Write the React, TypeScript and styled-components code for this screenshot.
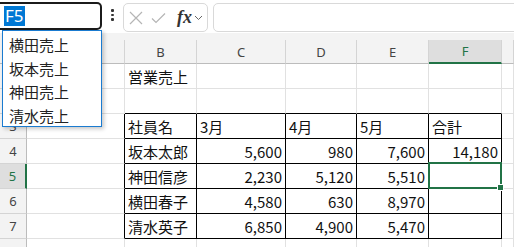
import React from 'react';
import styled, { createGlobalStyle, css } from 'styled-components';

const GlobalStyle = createGlobalStyle`
    html, body {
        margin: 0;
        padding: 0;
        background: #fff;
    }
    body {
        font-family: "Noto Sans CJK JP", "Noto Sans", sans-serif;
        color: #1a1a1a;
    }
`;

const GREEN = '#217346';
const GRID = '#e1e1e1';

const Page = styled.div`
    position: relative;
    width: 514px;
    height: 247px;
    overflow: hidden;
    background: #fff;
`;

const Toolbar = styled.div`
    display: flex;
    align-items: flex-start;
    height: 33px;
    background: #fff;
`;

const NameBox = styled.div`
    display: flex;
    align-items: center;
    box-sizing: border-box;
    width: 102px;
    height: 28px;
    margin-top: 2px;
    padding-left: 4px;
    border: 2px solid #1b1b1b;
    border-left: none;
    border-radius: 0 5px 5px 0;
    font-size: 17px;
    font-family: "Noto Sans", "Noto Sans CJK JP", sans-serif;
`;

const Selected = styled.span`
    background: #0078d4;
    color: #fff;
    padding: 0 1px;
    line-height: 20px;
`;

const Dots = styled.div`
    display: flex;
    flex-direction: column;
    align-items: center;
    justify-content: center;
    gap: 2px;
    width: 21px;
    height: 30px;

    span {
        width: 2.5px;
        height: 2.5px;
        border-radius: 1px;
        background: #333;
    }
`;

const ToolBox = styled.div`
    display: flex;
    align-items: center;
    box-sizing: border-box;
    width: 85px;
    height: 29px;
    margin-top: 3px;
    padding-left: 5px;
    gap: 8px;
    border: 1px solid #d9d9d9;
    border-radius: 5px;
`;

const Fx = styled.span`
    display: flex;
    align-items: center;
    gap: 2px;
    margin-left: 3px;
    font-family: "Liberation Serif", serif;
    font-style: italic;
    font-weight: bold;
    font-size: 18px;
    color: #333;
`;

const FormulaInput = styled.div`
    flex: 1;
    box-sizing: border-box;
    height: 29px;
    margin: 3px -10px 0 5px;
    border: 1px solid #d9d9d9;
    border-radius: 5px;
`;

const HeaderBand = styled.div`
    padding-top: 7px;
    background: #f3f3f3;
`;

const Row = styled.div`
    display: grid;
    grid-template-columns: 27px 98px 72px 89px 71px 72px 73px 1fr;
    height: 25px;
`;

const HeaderRow = styled(Row)`
    height: 24px;
`;

const ColHead = styled.div<{ $active?: boolean }>`
    display: flex;
    align-items: center;
    justify-content: center;
    box-sizing: border-box;
    border-right: 1px solid #d4d4d4;
    border-bottom: 1px solid #bcbcbc;
    background: #f3f3f3;
    font-family: "Noto Sans", sans-serif;
    font-size: 13px;
    color: #444;
    ${(p) =>
        p.$active &&
        css`
            background: #dedede;
            color: ${GREEN};
            border-bottom: 2px solid ${GREEN};
        `}
`;

const RowHead = styled.div<{ $active?: boolean }>`
    display: flex;
    align-items: center;
    justify-content: center;
    box-sizing: border-box;
    border-right: 1px solid #bcbcbc;
    border-bottom: 1px solid #d4d4d4;
    background: #f3f3f3;
    font-family: "Noto Sans", sans-serif;
    font-size: 13px;
    color: #444;
    ${(p) =>
        p.$active &&
        css`
            background: #dedede;
            color: ${GREEN};
            border-right: 2px solid ${GREEN};
        `}
`;

const Cell = styled.div<{
    $num?: boolean;
    $right?: boolean;
    $bottom?: boolean;
    $selected?: boolean;
}>`
    position: relative;
    display: flex;
    align-items: center;
    justify-content: ${(p) => (p.$num ? 'flex-end' : 'flex-start')};
    box-sizing: border-box;
    padding: 0 3px;
    border-right: 1px solid ${(p) => (p.$right ? '#000' : GRID)};
    border-bottom: 1px solid ${(p) => (p.$bottom ? '#000' : GRID)};
    font-size: 15px;
    white-space: nowrap;
    color: #111;

    ${(p) =>
        p.$selected &&
        css`
            &::after {
                content: '';
                position: absolute;
                top: -2px;
                left: -1px;
                right: -1px;
                bottom: -1px;
                border: 2px solid ${GREEN};
            }
            &::before {
                content: '';
                position: absolute;
                right: -3px;
                bottom: -3px;
                width: 5px;
                height: 5px;
                background: ${GREEN};
                border: 1px solid #fff;
                z-index: 1;
            }
        `}
`;

const Dropdown = styled.ul`
    position: absolute;
    top: 30px;
    left: 2px;
    box-sizing: border-box;
    width: 100px;
    height: 97px;
    margin: 0;
    padding: 2px 0 0;
    list-style: none;
    background: #fff;
    border: 1px solid #1a7bd0;
    box-shadow: 2px 2px 4px rgba(0, 0, 0, 0.22);
    z-index: 5;
`;

const DropItem = styled.li`
    height: 23.5px;
    padding-left: 6px;
    font-size: 15px;
    line-height: 23px;
    color: #222;
`;

// G is cut off at the right edge, its letter falls outside the window
const columns = ['A', 'B', 'C', 'D', 'E', 'F', ''];

const rows: (string | number)[][] = [
    ['', '営業売上', '', '', '', '', ''],
    ['', '', '', '', '', '', ''],
    ['', '社員名', '3月', '4月', '5月', '合計', ''],
    ['', '坂本太郎', 5600, 980, 7600, 14180, ''],
    ['', '神田信彦', 2230, 5120, 5510, '', ''],
    ['', '横田春子', 4580, 630, 8970, '', ''],
    ['', '清水英子', 6850, 4900, 5470, '', ''],
    ['', '', '', '', '', '', '']
];

const inTable = (r: number, c: number) => r >= 3 && r <= 7 && c >= 1 && c <= 5;

const App = () => {
    return (
        <Page>
            <GlobalStyle />
            <Toolbar>
                <NameBox>
                    <Selected>F5</Selected>
                </NameBox>
                <Dots>
                    <span />
                    <span />
                    <span />
                </Dots>
                <ToolBox>
                    <svg width="14" height="14" viewBox="0 0 14 14">
                        <path d="M1 1 L13 13 M13 1 L1 13" stroke="#b5b5b5" strokeWidth="1.2" fill="none" />
                    </svg>
                    <svg width="15" height="14" viewBox="0 0 15 14">
                        <path d="M1 7.5 L5 11.5 L14 2.5" stroke="#b5b5b5" strokeWidth="1.2" fill="none" />
                    </svg>
                    <Fx>
                        fx
                        <svg width="9" height="6" viewBox="0 0 9 6">
                            <path d="M1 1 L4.5 4.5 L8 1" stroke="#666" strokeWidth="1" fill="none" />
                        </svg>
                    </Fx>
                </ToolBox>
                <FormulaInput />
            </Toolbar>

            <HeaderBand>
                <HeaderRow>
                    <ColHead />
                    {columns.map((c, i) => (
                        <ColHead key={i} $active={c === 'F'}>
                            {c}
                        </ColHead>
                    ))}
                </HeaderRow>
            </HeaderBand>

            {rows.map((cells, i) => {
                const r = i + 1;
                return (
                    <Row key={r}>
                        <RowHead $active={r === 5}>{r < 8 ? r : ''}</RowHead>
                        {cells.map((v, c) => (
                            <Cell
                                key={c}
                                $num={typeof v === 'number'}
                                $right={inTable(r, c) || (r >= 3 && r <= 7 && c === 0)}
                                $bottom={inTable(r, c) || (r === 2 && c >= 1 && c <= 5)}
                                $selected={r === 5 && c === 5}
                            >
                                {typeof v === 'number' ? v.toLocaleString('en-US') : v}
                            </Cell>
                        ))}
                    </Row>
                );
            })}

            <Dropdown>
                <DropItem>横田売上</DropItem>
                <DropItem>坂本売上</DropItem>
                <DropItem>神田売上</DropItem>
                <DropItem>清水売上</DropItem>
            </Dropdown>
        </Page>
    );
};

export default App;
